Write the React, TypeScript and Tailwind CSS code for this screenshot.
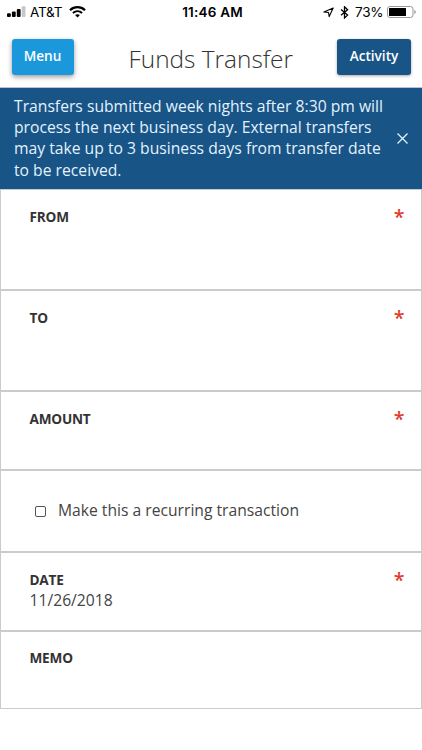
import React from 'react';

const StatusBar: React.FC = () => (
  <div className="h-6 flex items-center justify-between pl-[7px] pr-[6px] text-black font-['Inter','Liberation_Sans',sans-serif] text-[13px]">
    <div className="w-[120px] flex items-center">
      <svg width="19" height="12" viewBox="0 0 19 12">
        <rect x="0" y="7.3" width="3.8" height="3.7" rx="1" />
        <rect x="4.9" y="5.6" width="3.8" height="5.4" rx="1" />
        <rect x="9.8" y="3" width="3.8" height="8" rx="1" />
        <rect x="14.7" y="0.2" width="3.8" height="10.8" rx="1" fill="#c8c8c8" />
      </svg>
      <span className="ml-[4px] w-[33px] whitespace-nowrap text-[13.5px] tracking-[-0.2px]">AT&amp;T</span>
      <svg className="ml-[6px]" width="17" height="12" viewBox="0 0 17 12" fill="none" stroke="#000">
        <path d="M1 4.2C5.2 0.2 11.8 0.2 16 4.2" strokeWidth="2.2" />
        <path d="M3.9 7.1C6.6 4.7 10.4 4.7 13.1 7.1" strokeWidth="2" />
        <path d="M8.5 11.5L6.1 9.1C7.5 7.9 9.5 7.9 10.9 9.1Z" fill="#000" stroke="none" />
      </svg>
    </div>
    <span className="pl-[2px] font-semibold text-[13.5px] tracking-[0.2px] whitespace-nowrap">11:46 AM</span>
    <div className="w-[120px] flex items-center justify-end">
      <svg width="11" height="11" viewBox="0 0 11 11" fill="none" stroke="#000" strokeWidth="1.1">
        <path d="M10.2 1L6.2 9.6L5.5 5.5L0.9 5Z" strokeLinejoin="round" />
      </svg>
      <svg className="ml-[6px]" width="9" height="13" viewBox="0 0 9 13" fill="none" stroke="#000" strokeWidth="1.3">
        <path d="M1 3.4L7.6 9.1L4.5 12V0.8L7.6 3.7L1 9.3" />
      </svg>
      <span className="ml-[6px] w-[28px] whitespace-nowrap text-[13.5px] tracking-[-0.2px]">73%</span>
      <svg className="ml-[4px]" width="29" height="12" viewBox="0 0 29 12">
        <rect x="0.5" y="0.5" width="25.5" height="11" rx="2.5" fill="none" stroke="#999" />
        <rect x="2" y="2" width="17" height="8" rx="0.5" />
        <path d="M27.3 4C29.2 4.6 29.2 7.4 27.3 8Z" fill="#999" />
      </svg>
    </div>
  </div>
);

const Field: React.FC<{ label: string; height: string; value?: string; required?: boolean }> = ({ label, height, value, required }) => (
  <div className={`${height} border border-[#cbcbcb] pl-[28.5px] pr-[16.5px] pt-[15.5px] flex justify-between items-start`}>
    <div>
      <div className="text-[13.6px] leading-[21px] font-bold tracking-[-0.2px] text-[#333]">{label}</div>
      {value && <div className="text-[15.68px] leading-[21px] text-[#444]">{value}</div>}
    </div>
    {required && <span className="-mt-[3px] text-[19.5px] leading-7 font-semibold text-[#e23b2a]">*</span>}
  </div>
);

const App: React.FC = () => {
  return (
    <div className="w-[422px] h-[750px] bg-white overflow-hidden font-['Open_Sans','Noto_Sans',sans-serif]">
      <StatusBar />
      <header className="h-16 flex items-start justify-between px-[11px] pt-[15px] border-b border-[#b9c4d0]">
        <div className="w-[73.5px] pl-[0.5px]">
          <button className="w-[62px] h-9 rounded-[3px] bg-[#1b98dc] text-white text-[13.6px] font-semibold leading-[34px] pb-[2px] shadow-[0_2px_5px_rgba(0,0,0,0.4)]">Menu</button>
        </div>
        <h1 className="text-[24.4px] leading-[39px] font-light text-[#333] whitespace-nowrap">Funds Transfer</h1>
        <button className="w-[74px] h-9 rounded-[3px] bg-[#185486] text-white text-[13.6px] font-semibold leading-[34px] pb-[2px] shadow-[0_1px_3px_rgba(0,0,0,0.35)]">Activity</button>
      </header>
      <div className="h-[101px] bg-[#185486] flex items-start pl-[14px] pt-[7.5px] text-[#e2f2ff]">
        <p className="w-[376px] text-[15.7px] leading-[21.4px] whitespace-nowrap">
          Transfers submitted week nights after 8:30 pm will<br />
          process the next business day. External transfers<br />
          may take up to 3 business days from transfer date<br />
          to be received.
        </p>
        <svg className="ml-[6px] mt-[36.5px]" width="13" height="13" viewBox="0 0 13 13" stroke="currentColor" strokeWidth="1.3">
          <path d="M1.5 1.5L11.5 11.5M11.5 1.5L1.5 11.5" />
        </svg>
      </div>
      <main>
        <Field label="FROM" height="h-[101px]" required />
        <Field label="TO" height="h-[101px]" required />
        <Field label="AMOUNT" height="h-[79px]" required />
        <div className="h-[82px] border border-[#cbcbcb] flex items-center pl-[34px]">
          <span className="w-[11px] h-[11px] rounded-[2px] border border-[#555]" />
          <span className="ml-[12px] text-[15.66px] text-[#444] whitespace-nowrap">Make this a recurring transaction</span>
        </div>
        <Field label="DATE" height="h-[78.5px]" value="11/26/2018" required />
        <Field label="MEMO" height="h-[78.5px]" />
      </main>
    </div>
  );
};

export default App;
